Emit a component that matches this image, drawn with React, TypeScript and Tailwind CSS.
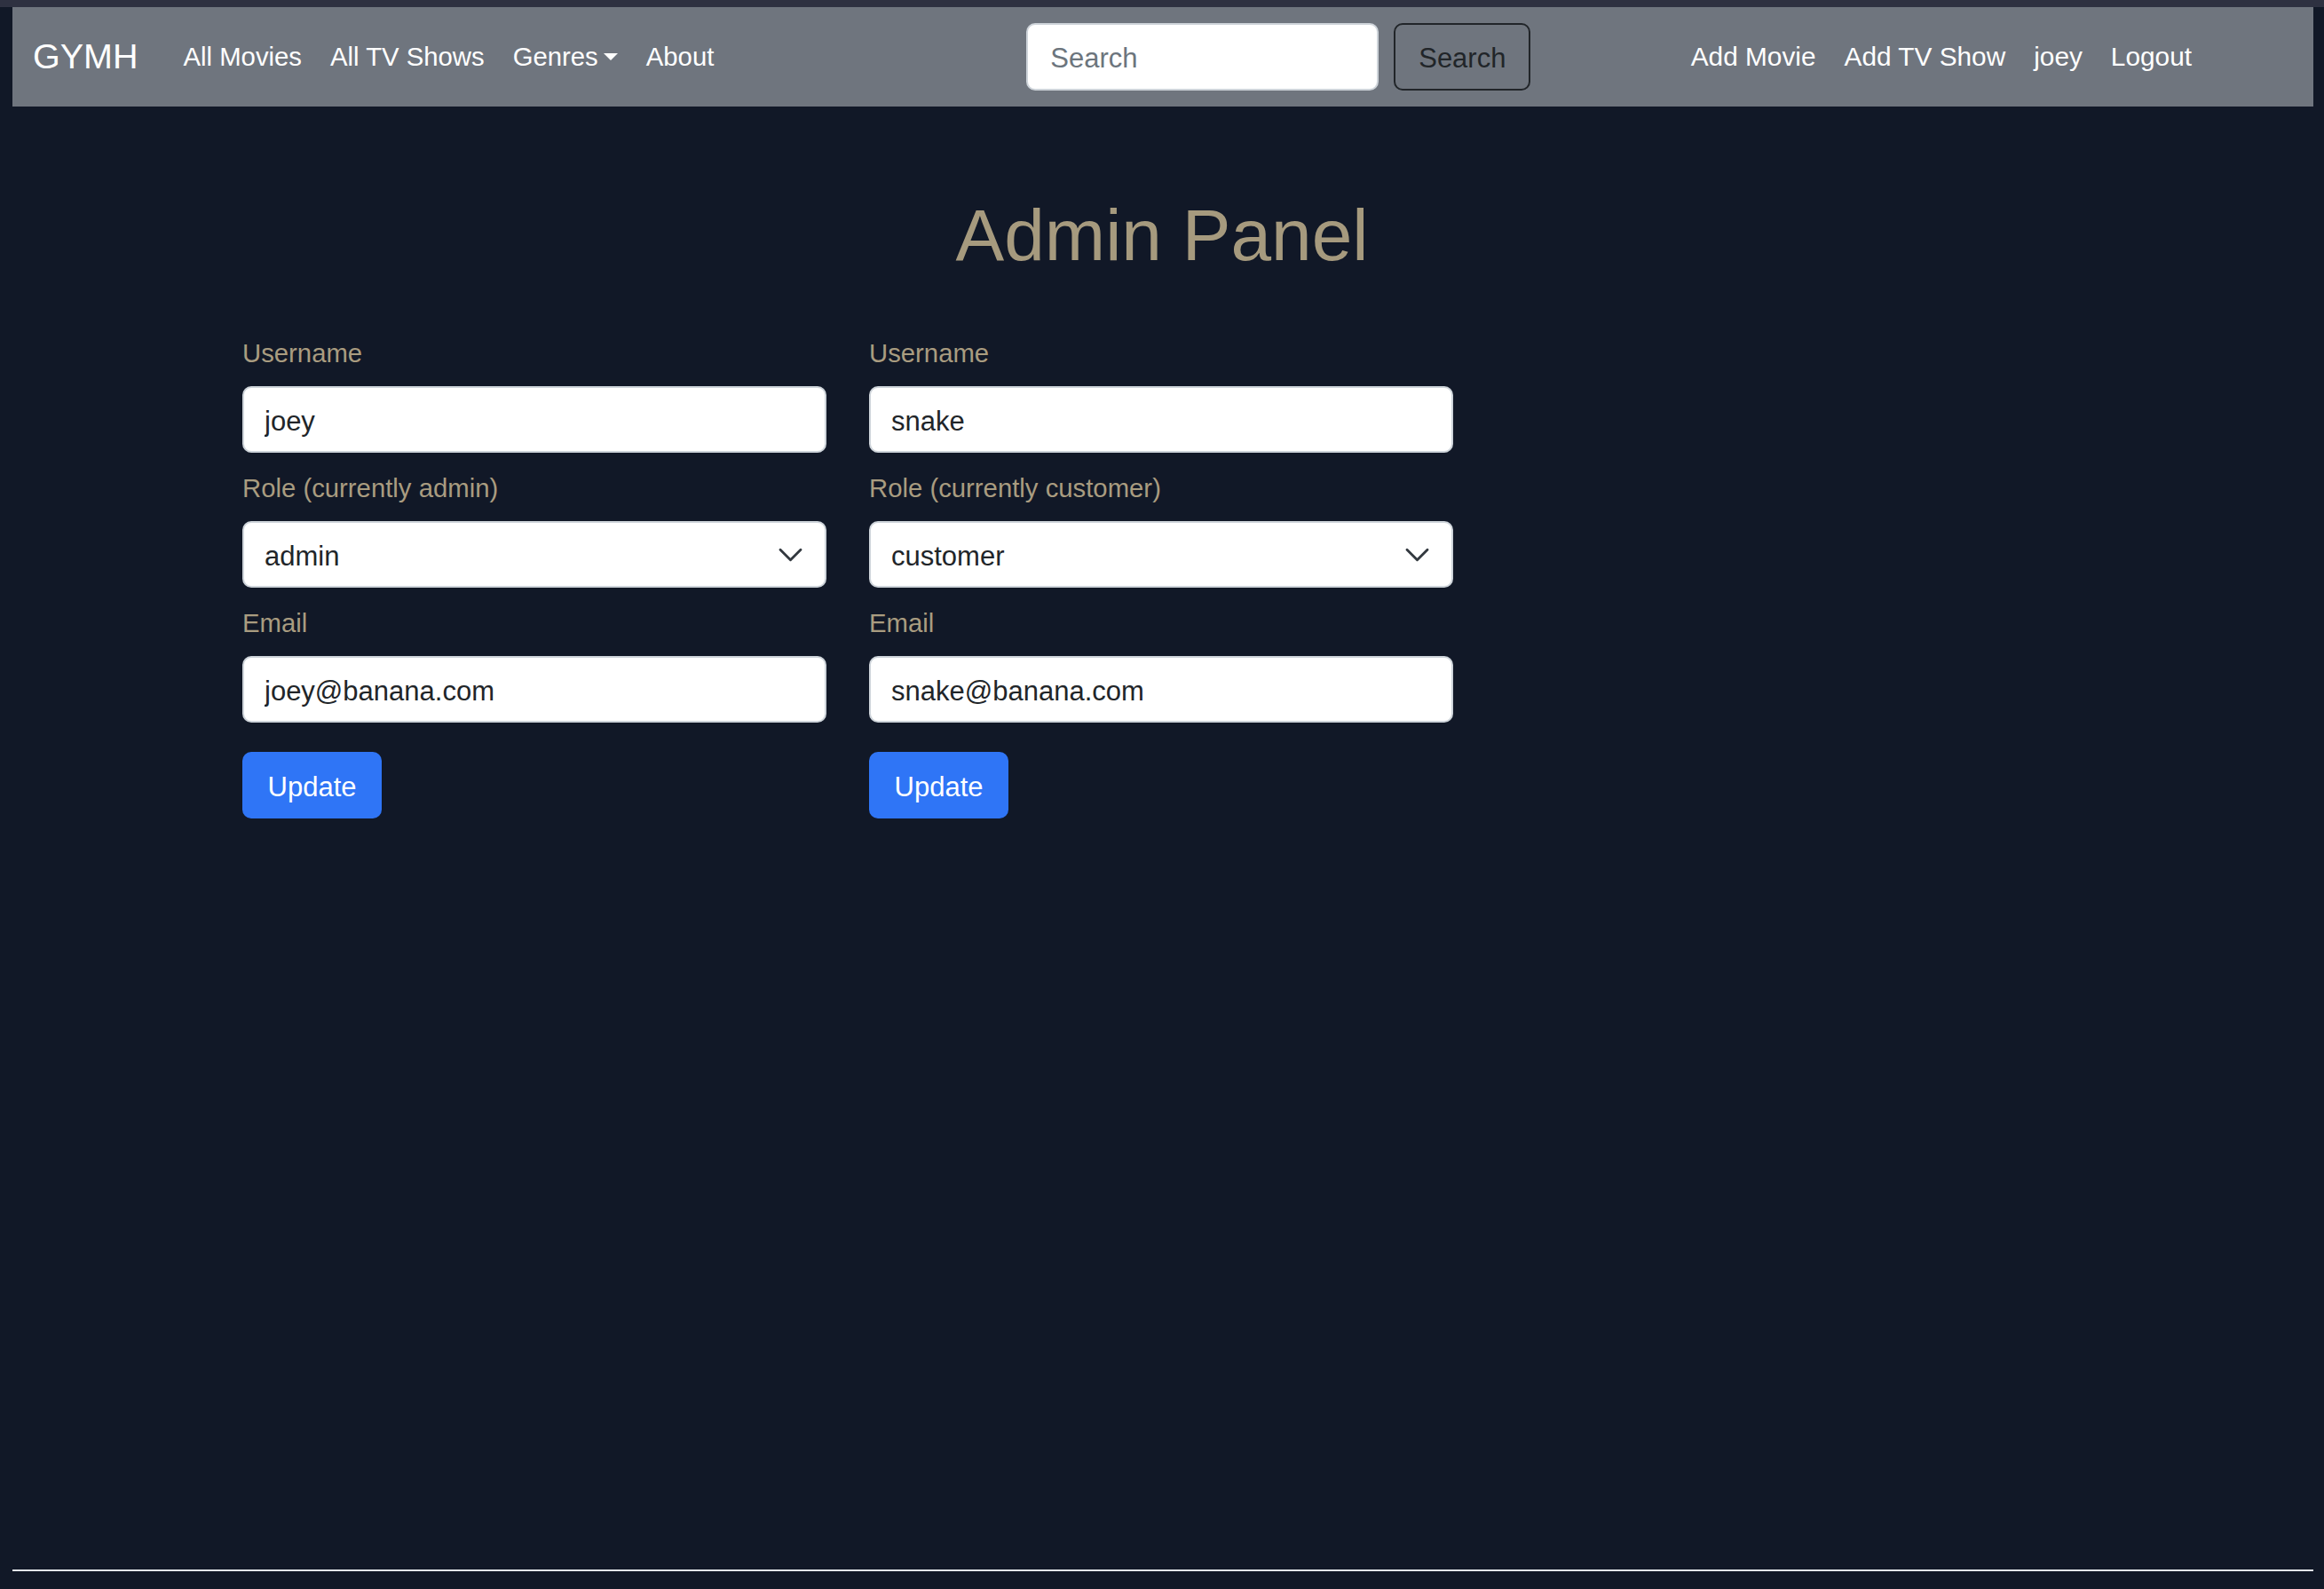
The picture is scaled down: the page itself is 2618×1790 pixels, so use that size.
import { useState } from "react";

type User = {
  username: string;
  role: string;
  email: string;
};

const initialUsers: User[] = [
  { username: "joey", role: "admin", email: "joey@banana.com" },
  { username: "snake", role: "customer", email: "snake@banana.com" },
];

function UserForm({ user }: { user: User }) {
  const [username, setUsername] = useState(user.username);
  const [role, setRole] = useState(user.role);
  const [email, setEmail] = useState(user.email);

  return (
    <form className="flex flex-col" onSubmit={(e) => e.preventDefault()}>
      <label className="mb-[15px] text-[29.3px] leading-[44px] text-[#a99c80]">
        Username
      </label>
      <input
        value={username}
        onChange={(e) => setUsername(e.target.value)}
        className="mb-[18px] h-[75px] rounded-[10px] border-2 border-[#ced4da] bg-white px-[23px] pt-[4px] text-[31px] text-[#212529] outline-none"
      />

      <label className="mb-[15px] text-[29.3px] leading-[44px] text-[#a99c80]">
        Role (currently {user.role})
      </label>
      <div className="relative mb-[18px]">
        <select
          value={role}
          onChange={(e) => setRole(e.target.value)}
          className="h-[75px] w-full appearance-none rounded-[10px] border-2 border-[#ced4da] bg-white pb-0 pl-[23px] pr-[70px] pt-[4px] text-[31px] text-[#212529] outline-none"
        >
          <option value="admin">admin</option>
          <option value="customer">customer</option>
        </select>
        <svg
          className="pointer-events-none absolute right-[25px] top-1/2 h-[23px] w-[31px] -translate-y-1/2"
          viewBox="0 0 16 12"
          fill="none"
          stroke="#343a40"
          strokeWidth="1.5"
          strokeLinecap="round"
          strokeLinejoin="round"
        >
          <path d="m2 3 6 6 6-6" />
        </svg>
      </div>

      <label className="mb-[15px] text-[29.3px] leading-[44px] text-[#a99c80]">
        Email
      </label>
      <input
        value={email}
        onChange={(e) => setEmail(e.target.value)}
        className="h-[75px] rounded-[10px] border-2 border-[#ced4da] bg-white px-[23px] pt-[4px] text-[31px] text-[#212529] outline-none"
      />

      <div className="mt-[33px]">
        <button
          type="submit"
          className="h-[75px] w-[157px] rounded-[10px] bg-[#2f75f6] pt-[4px] text-[31px] text-white"
        >
          Update
        </button>
      </div>
    </form>
  );
}

function Navbar() {
  const left = ["All Movies", "All TV Shows"];
  const right = ["Add Movie", "Add TV Show", "joey", "Logout"];

  return (
    <nav className="flex h-[112px] items-center bg-[#6f757e] pl-[23px] pr-[121px] text-white">
      <a className="mr-[35px] text-[39.5px] leading-none">GYMH</a>

      {left.map((item) => (
        <a key={item} className="px-[16px] text-[29.3px] leading-none">
          {item}
        </a>
      ))}
      <a className="flex items-center px-[16px] text-[29.3px] leading-none">
        Genres
        <span className="ml-[6px] h-0 w-0 border-x-[8px] border-t-[8px] border-x-transparent border-t-white" />
      </a>
      <a className="px-[16px] text-[29.3px] leading-none">About</a>

      <form
        className="ml-[336px] flex items-center"
        onSubmit={(e) => e.preventDefault()}
      >
        <input
          placeholder="Search"
          className="h-[76px] w-[397px] rounded-[10px] border-2 border-[#ced4da] bg-white px-[25px] pt-[4px] text-[31px] text-[#212529] outline-none placeholder:text-[#6c757d]"
        />
        <button
          type="submit"
          className="ml-[17px] h-[76px] w-[154px] rounded-[10px] border-2 border-[#212529] pt-[4px] text-[31px] text-[#212529]"
        >
          Search
        </button>
      </form>

      <div className="ml-auto flex items-center">
        {right.map((item) => (
          <a key={item} className="px-[16px] text-[29.8px] leading-none">
            {item}
          </a>
        ))}
      </div>
    </nav>
  );
}

export default function App() {
  return (
    <div className="flex min-h-screen flex-col bg-[#111827] font-['Liberation_Sans',Arial,sans-serif]">
      <div className="h-[8px] bg-[#2e3141]" />
      <div className="pl-[14px] pr-[12px]">
        <Navbar />
      </div>

      <main className="flex-1">
        <div className="mx-auto w-[2168px]">
          <h1 className="mt-[96px] text-center text-[82px] leading-[1.2] text-[#a69a7e]">
            Admin Panel
          </h1>

          <div className="mt-[62px] grid grid-cols-[658px_658px] gap-x-[48px] pl-[48px]">
            {initialUsers.map((user) => (
              <UserForm key={user.username} user={user} />
            ))}
          </div>
        </div>
      </main>

      <hr className="ml-[14px] mr-[12px] border-t-2 border-[#e2e5ea]" />
      <div className="h-[20px]" />
    </div>
  );
}
